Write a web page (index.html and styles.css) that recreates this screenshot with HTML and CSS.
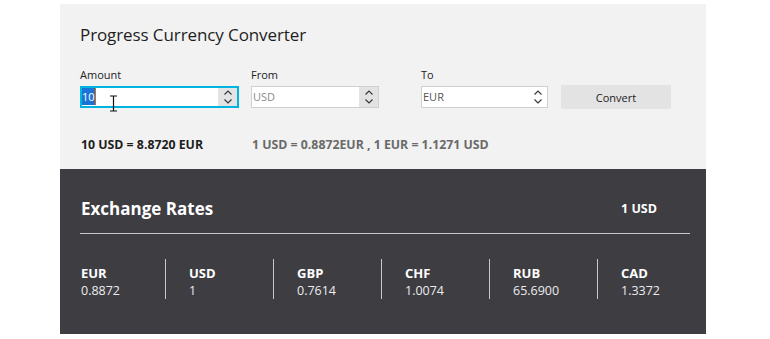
FILE: index.html
```html
<!DOCTYPE html>
<html>
<head>
<meta charset="utf-8">
<link rel="stylesheet" href="styles.css">
</head>
<body>
<div class="card">
  <section class="converter">
    <h1 class="title">Progress Currency Converter</h1>
    <div class="form">
      <div class="field f-amount">
        <label class="label">Amount</label>
        <div class="spin focused">
          <span class="value"><span class="sel">10</span></span>
          <span class="arrows">
            <svg width="10" height="16" viewBox="0 0 10 16"><path d="M1.5 5.5 L5 2 L8.5 5.5 M1.5 10.5 L5 14 L8.5 10.5" fill="none" stroke="#333" stroke-width="1.1"/></svg>
          </span>
          <svg class="ibeam" width="9" height="17" viewBox="0 0 9 17"><path d="M1 1 H8 M1 16 H8 M4.5 1 V16" fill="none" stroke="#111" stroke-width="1.2"/></svg>
        </div>
      </div>
      <div class="field f-from">
        <label class="label">From</label>
        <div class="spin">
          <span class="value muted">USD</span>
          <span class="arrows">
            <svg width="10" height="16" viewBox="0 0 10 16"><path d="M1.5 5.5 L5 2 L8.5 5.5 M1.5 10.5 L5 14 L8.5 10.5" fill="none" stroke="#333" stroke-width="1.1"/></svg>
          </span>
        </div>
      </div>
      <div class="field f-to">
        <label class="label">To</label>
        <div class="spin">
          <span class="value">EUR</span>
          <span class="arrows plain">
            <svg width="10" height="16" viewBox="0 0 10 16"><path d="M1.5 5.5 L5 2 L8.5 5.5 M1.5 10.5 L5 14 L8.5 10.5" fill="none" stroke="#333" stroke-width="1.1"/></svg>
          </span>
        </div>
      </div>
      <button class="convert">Convert</button>
    </div>
    <div class="results">
      <span class="result">10 USD = 8.8720 EUR</span>
      <span class="rate-info">1 USD = 0.8872EUR , 1 EUR = 1.1271 USD</span>
    </div>
  </section>
  <section class="rates">
    <div class="rates-head">
      <h2 class="rates-title">Exchange Rates</h2>
      <span class="base">1 USD</span>
    </div>
    <div class="rates-list">
      <div class="rate"><div class="code">EUR</div><div class="num">0.8872</div></div>
      <div class="rate"><div class="code">USD</div><div class="num">1</div></div>
      <div class="rate"><div class="code">GBP</div><div class="num">0.7614</div></div>
      <div class="rate"><div class="code">CHF</div><div class="num">1.0074</div></div>
      <div class="rate"><div class="code">RUB</div><div class="num">65.6900</div></div>
      <div class="rate last"><div class="code">CAD</div><div class="num">1.3372</div></div>
    </div>
  </section>
</div>
</body>
</html>
```

FILE: styles.css
```css
* { box-sizing: border-box; }
html, body { margin: 0; padding: 0; background: #ffffff; }
body { font-family: "Open Sans", "Noto Sans", sans-serif; }

.card {
  margin: 4px 0 0 60px;
  width: 646px;
}

.converter {
  height: 165px;
  background: #f2f2f2;
  padding: 19px 0 0 20px;
}

.title {
  margin: 0;
  font-size: 17px;
  font-weight: 400;
  line-height: 24px;
  color: #1e1e1e;
  letter-spacing: -0.1px;
}

.form {
  display: flex;
  align-items: flex-end;
  margin-top: 20px;
}

.field { display: flex; flex-direction: column; }
.f-amount { width: 159px; margin-right: 12px; }
.f-from { width: 128px; margin-right: 42px; }
.f-to { width: 127px; margin-right: 13px; }

.label {
  font-size: 11px;
  line-height: 15px;
  color: #222;
  margin-bottom: 4px;
}

.spin {
  position: relative;
  display: flex;
  height: 22px;
  background: #ffffff;
  border: 1px solid #d0d0d0;
}
.spin.focused { border: 2px solid #00b4e0; }

.value {
  flex: 1;
  font-size: 11px;
  line-height: 20px;
  padding-left: 1px;
  color: #555;
}
.focused .value { line-height: 18px; padding-left: 0; }
.value.muted { color: #8a8a8a; }
.sel {
  background: #1a73d6;
  color: #fff;
  padding: 1px 0;
  border-right: 1px solid #e06a00;
}

.arrows {
  width: 19px;
  background: #e3e3e3;
  display: flex;
  align-items: center;
  justify-content: center;
}
.arrows.plain { background: #ffffff; }

.ibeam {
  position: absolute;
  left: 27px;
  top: 7px;
}

.convert {
  width: 110px;
  height: 24px;
  margin-bottom: -1px;
  border: none;
  background: #e3e3e3;
  font-family: "Open Sans", "Noto Sans", sans-serif;
  font-size: 11px;
  color: #222;
  padding: 0;
}

.results {
  display: flex;
  margin-top: 29px;
  font-size: 12.3px;
  font-weight: 700;
  line-height: 16px;
}
.result { width: 172px; padding-left: 1px; color: #1e1e1e; }
.rate-info { color: #6a6a6a; }

.rates {
  height: 165px;
  background: #3e3d42;
  padding: 0 16px 0 20px;
  color: #ffffff;
}

.rates-head {
  display: flex;
  justify-content: space-between;
  align-items: center;
  height: 65px;
  padding-top: 15px;
  border-bottom: 1px solid #c8c8c8;
}
.rates-title {
  margin: 0;
  font-size: 17px;
  font-weight: 700;
  padding-left: 1px;
}
.base {
  font-size: 12.5px;
  font-weight: 700;
  margin-right: 33px;
}

.rates-list {
  display: flex;
  margin-top: 25px;
}
.rate {
  flex: 0 0 86px;
  margin-right: 22px;
  height: 40px;
  border-right: 1px solid #c8c8c8;
  padding: 6px 0 0 1px;
}
.rate.last { border-right: none; margin-right: 0; flex: 1 1 auto; }
.code {
  font-size: 13px;
  font-weight: 700;
  line-height: 17px;
}
.num {
  font-size: 12.5px;
  line-height: 17px;
  color: #ececec;
}
```
